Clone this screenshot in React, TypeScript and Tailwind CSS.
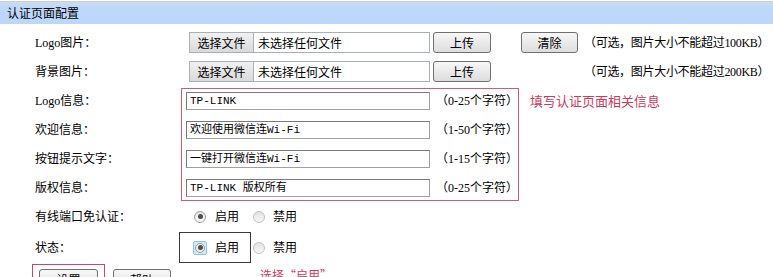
import React from "react";

const font = "font-['Liberation_Serif','Noto_Sans_CJK_SC',serif]";
const cjk = "font-['Noto_Sans_CJK_SC',sans-serif]";

function Radio({ checked }: { checked?: boolean }) {
  return (
    <span
      className={`flex h-[12px] w-[12px] shrink-0 items-center justify-center rounded-full border ${
        checked
          ? "border-[#a3a3a3] bg-[linear-gradient(#e4e4e4,#fafafa)]"
          : "border-[#c2c2c2] bg-[linear-gradient(#e2e2e2,#f7f7f7)]"
      }`}
    >
      {checked ? <span className="h-[5px] w-[5px] rounded-full bg-[#4d4d4d]" /> : null}
    </span>
  );
}

function Btn({ label, w }: { label: string; w: string }) {
  return (
    <span
      className={`flex h-[21px] ${w} shrink-0 items-center justify-center rounded-[3px] border border-[#707070] bg-[linear-gradient(#f7f7f7,#dddddd)] text-[12px] text-black ${cjk}`}
    >
      {label}
    </span>
  );
}

function FileInput() {
  return (
    <div className="flex h-[21px] w-[241px] shrink-0 border border-[#a9b0b8] bg-white">
      <span
        className={`flex w-[64px] items-center justify-center border-r border-[#a9b0b8] bg-[linear-gradient(#f1f1f1,#dadada)] text-[12px] ${cjk}`}
      >
        选择文件
      </span>
      <span className={`pl-[4px] text-[12px] leading-[19px] ${cjk}`}>未选择任何文件</span>
    </div>
  );
}

const infoRows = [
  { label: "Logo信息：", value: "TP-LINK", hint: "（0-25个字符）" },
  { label: "欢迎信息：", value: "欢迎使用微信连Wi-Fi", hint: "（1-50个字符）" },
  { label: "按钮提示文字：", value: "一键打开微信连Wi-Fi", hint: "（1-15个字符）" },
  { label: "版权信息：", value: "TP-LINK 版权所有", hint: "（0-25个字符）" },
];

export default function App() {
  return (
    <div className={`h-[277px] w-[773px] overflow-hidden bg-white text-[12px] text-black ${font}`}>
      <div className="mt-[1px] flex h-[23px] items-center border-t border-[#c6d0db] bg-[linear-gradient(to_bottom,#d2dbe6,#bdd8fb_22%,#bcd7fb)] pl-[7px]">
        <span className={`text-[12px] ${cjk}`}>认证页面配置</span>
      </div>

      <div className="mt-[8px] flex h-[21px] items-center">
        <span className="w-[189px] shrink-0 pl-[35px]">Logo图片：</span>
        <FileInput />
        <span className="ml-[3px]">
          <Btn label="上传" w="w-[58px]" />
        </span>
        <span className="ml-[30px]">
          <Btn label="清除" w="w-[57px]" />
        </span>
        <span className="ml-[6px] whitespace-nowrap tracking-[-0.3px]">（可选，图片大小不能超过100KB）</span>
      </div>

      <div className="mt-[8px] flex h-[21px] items-center">
        <span className="w-[189px] shrink-0 pl-[35px]">背景图片：</span>
        <FileInput />
        <span className="ml-[3px]">
          <Btn label="上传" w="w-[58px]" />
        </span>
        <span className="ml-[93px] whitespace-nowrap tracking-[-0.3px]">（可选，图片大小不能超过200KB）</span>
      </div>

      <div className="mt-[6px] flex h-[113px]">
        <div className="w-[181px] shrink-0 pl-[35px] pt-[4px]">
          {infoRows.map((r) => (
            <div key={r.label} className="h-[27px] leading-[18px] [&:not(:last-child)]:h-[29px]">
              {r.label}
            </div>
          ))}
        </div>
        <div className="h-[113px] w-[338px] shrink-0 border border-[#cf5b7a] pl-[4px] pt-[3px]">
          {infoRows.map((r) => (
            <div key={r.label} className="flex h-[29px] items-start last:h-[18px]">
              <span
                className={`h-[18px] w-[244px] shrink-0 overflow-hidden whitespace-nowrap border border-[#a0a0a0] border-l-[#7a7a7a] border-t-[#7a7a7a] pl-[3px] text-[11px] leading-[16px] font-['Liberation_Mono','Noto_Sans_CJK_SC',monospace]`}
              >
                {r.value}
              </span>
              <span className="ml-[6px] whitespace-nowrap leading-[18px]">{r.hint}</span>
            </div>
          ))}
        </div>
        <div className={`ml-[11px] pt-[4px] text-[13px] leading-[18px] text-[#d2385d] ${cjk}`}>填写认证页面相关信息</div>
      </div>

      <div className="flex h-[31px] items-center">
        <span className="w-[194px] shrink-0 pl-[35px]">有线端口免认证：</span>
        <Radio checked />
        <span className="ml-[9px]">启用</span>
        <span className="ml-[14px]">
          <Radio />
        </span>
        <span className="ml-[8px]">禁用</span>
      </div>

      <div className="flex h-[31px] items-center">
        <span className="w-[179px] shrink-0 pl-[35px]">状态：</span>
        <div className="flex h-[31px] w-[72px] shrink-0 items-center border border-[#3a3a3a] pl-[13px]">
          <span className="flex h-[14px] w-[14px] items-center justify-center rounded-[2px] border border-[#8fc3ec] bg-[#d4e9fb]">
            <span className="flex h-[10px] w-[10px] items-center justify-center rounded-full border border-[#9a9a9a] bg-[#eeeeee]">
              <span className="h-[5px] w-[5px] rounded-full bg-[#4d4d4d]" />
            </span>
          </span>
          <span className="ml-[8px]">启用</span>
        </div>
        <span className="ml-[2px]">
          <Radio />
        </span>
        <span className="ml-[8px]">禁用</span>
      </div>

      <div className="mt-[1px] flex items-start">
        <div className="ml-[32px] h-[30px] w-[73px] shrink-0 border border-[#cf4468] pl-[6px] pt-[4px]">
          <Btn label="设置" w="w-[59px]" />
        </div>
        <div className="ml-[8px] pt-[5px]">
          <Btn label="帮助" w="w-[58px]" />
        </div>
        <div className={`ml-[89px] pt-[2px] text-[#d2385d] ${cjk}`}>选择“启用”</div>
      </div>
    </div>
  );
}
